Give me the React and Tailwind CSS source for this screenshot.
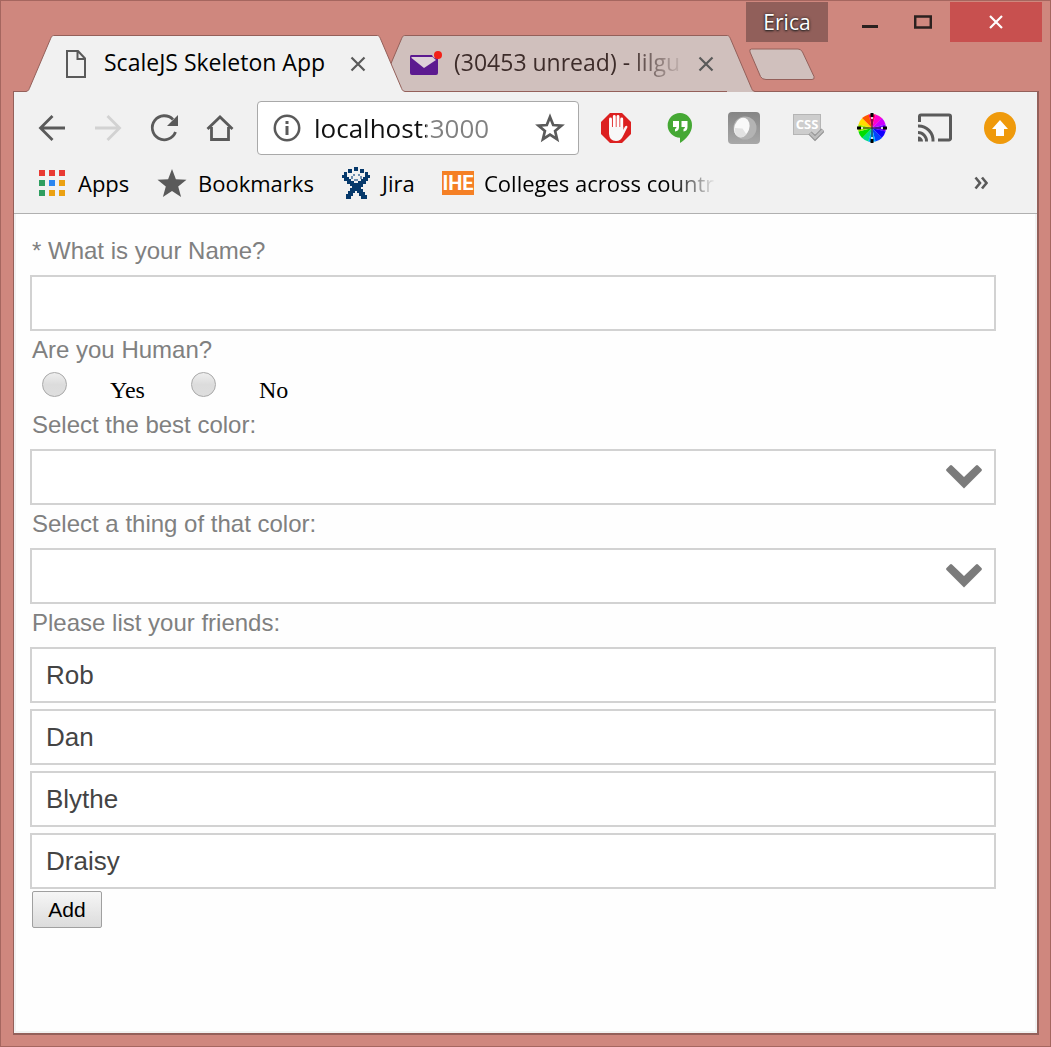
import React from "react";

const UI = "font-['Open_Sans','Noto_Sans',sans-serif]";
const ARIAL = "font-['Liberation_Sans',Arial,sans-serif]";

function TabEdge({ side, fill, stroke }) {
  const left = side === "left";
  return (
    <svg width="28" height="57" viewBox="0 0 28 57" className="block shrink-0">
      <g transform={left ? undefined : "translate(28 0) scale(-1 1)"}>
        <path d="M0 57V56.5C3 56 3 54 4 52L24 5C25.500 1.500 26 .5 28 .5V57Z" fill={fill} />
        <path d="M0 56.5C3 56 3 54 4 52L24 5C25.500 1.500 26 .5 28 .5" fill="none" stroke={stroke} />
      </g>
    </svg>
  );
}

function CloseX() {
  return (
    <svg width="16" height="16" viewBox="0 0 16 16" stroke="#5a5a5a" strokeWidth="2.200">
      <path d="M1.500 1.500l13 13M14.500 1.500l-13 13" />
    </svg>
  );
}

function WindowControls() {
  return (
    <div className="flex h-[41px] justify-end pt-px pr-2">
      <button className={`${UI} mr-[15px] w-[82px] bg-[#915f5a] text-[21px] leading-[40px] text-white [text-shadow:0_0_3px_#222,0_1px_2px_#222]`}>
        Erica
      </button>
      <button aria-label="Minimize" className="flex w-[53px] items-center justify-center">
        <svg width="18" height="16" viewBox="0 0 18 16"><path d="M1 11h16v3H1z" fill="#2b211f" /></svg>
      </button>
      <button aria-label="Maximize" className="flex w-[54px] items-center justify-center">
        <svg width="18" height="14" viewBox="0 0 18 14"><path d="M1.200 1.500h15.600v11H1.200z" fill="none" stroke="#2b211f" strokeWidth="2.500" /></svg>
      </button>
      <button aria-label="Close" className="flex w-[92px] items-center justify-center bg-[#c8504f]">
        <svg width="14" height="14" viewBox="0 0 14 14" stroke="#fff" strokeWidth="2.200"><path d="M1 1l12 12M13 1L1 13" /></svg>
      </button>
    </div>
  );
}

function Tabs() {
  return (
    <div className="relative z-10 -mt-[7px] -mb-px flex h-[57px] pl-[25px]">
      <div className="relative z-10 flex">
        <TabEdge side="left" fill="#f1f1f1" stroke="#94605a" />
        <div className="flex w-[323px] items-center border-t border-[#94605a] bg-[#f1f1f1] pl-[11px]">
          <svg width="22" height="28" viewBox="0 0 22 28" fill="none" stroke="#5a5a5a" strokeWidth="2">
            <path d="M2 1h11l7 7.500V27H2zM12.500 1v8H20" />
          </svg>
          <span className={`${UI} ml-[17px] flex-1 pb-[3px] text-[23px] whitespace-nowrap text-black`}>ScaleJS Skeleton App</span>
          <button aria-label="Close tab" className="mr-[11px]"><CloseX /></button>
        </div>
        <TabEdge side="right" fill="#f1f1f1" stroke="#94605a" />
      </div>
      <div className="-ml-[28px] flex">
        <TabEdge side="left" fill="#d0c0bd" stroke="#94605a" />
        <div className="flex w-[322px] items-center border-y border-[#94605a] bg-[#d0c0bd] pl-[3px]">
          <svg width="34" height="28" viewBox="0 0 34 28">
            <path d="M3 5h21a5 5 0 0 0 6 3v15a2 2 0 0 1-2 2H4a2 2 0 0 1-2-2V7a2 2 0 0 1 1-2z" fill="#5c1a90" />
            <path d="M3.500 7h21L28 10l-12 8L3.500 8z" fill="#ded0d8" />
            <circle cx="30" cy="5" r="4" fill="#f32018" />
          </svg>
          <span className={`${UI} ml-[12px] w-[232px] overflow-hidden pb-[3px] text-[23px] whitespace-nowrap text-[#3d2c2a] [mask-image:linear-gradient(to_right,#000_75%,transparent)]`}>
            (30453 unread) - lilgu
          </span>
          <button aria-label="Close tab" className="ml-[12px]"><CloseX /></button>
        </div>
        <TabEdge side="right" fill="#d0c0bd" stroke="#94605a" />
      </div>
      <button aria-label="New tab" className="-ml-[7px] self-start pt-[13px]">
        <svg width="68" height="34" viewBox="0 0 68 34">
          <path d="M3.500 1H50q3 0 4.500 3L66 28.500q1 3-2 3H18q-4 0-5.500-3L2 4Q1 1 3.500 1z" fill="#d0c0bd" stroke="#94605a" />
        </svg>
      </button>
    </div>
  );
}

function NavButton({ label, children, color = "#5a5a5a" }) {
  return (
    <button aria-label={label} className="flex h-8 w-8 shrink-0 items-center justify-center">
      <svg width="32" height="32" viewBox="0 0 32 32" fill="none" stroke={color} strokeWidth="2.800">
        {children}
      </svg>
    </button>
  );
}

function ExtButton({ label, children }) {
  return (
    <button aria-label={label} className="h-8 w-8 shrink-0">
      <svg width="32" height="32" viewBox="0 0 32 32">{children}</svg>
    </button>
  );
}

const WHEEL = ["#f06", "#f0c", "#c0f", "#70f", "#10f", "#04f", "#0af", "#0d8", "#0d0", "#9e0", "#fd0", "#f50"];

function wedge(i) {
  const a = ((i * 30 - 105) * Math.PI) / 180;
  const b = ((i * 30 - 74) * Math.PI) / 180;
  return `M16 16L${16 + 14 * Math.cos(a)} ${16 + 14 * Math.sin(a)}A14 14 0 0 1 ${16 + 14 * Math.cos(b)} ${16 + 14 * Math.sin(b)}Z`;
}

function Toolbar() {
  return (
    <div className="flex h-[72px] items-center pr-[21px] pl-[22px]">
      <div className="flex gap-6">
        <NavButton label="Back"><path d="M29 16H4.500M16.500 4L4.500 16l12 12" /></NavButton>
        <NavButton label="Forward" color="#d2d2d2"><path d="M3 16h24.500M15.500 4l12 12-12 12" /></NavButton>
        <NavButton label="Reload">
          <path d="M25 7.500A12 12 0 1 0 27.500 20" />
          <path d="M30 3v11H19z" fill="#5a5a5a" stroke="none" />
        </NavButton>
        <NavButton label="Home"><path d="M3.500 17L16 5l12.500 12M7.500 15v12.500h17V15" /></NavButton>
      </div>
      <div className="mx-[21px] flex h-[54px] flex-1 items-center rounded-[4px] border border-[#a9a9a9] bg-white pr-[12px] pl-[15px]">
        <svg width="28" height="28" viewBox="0 0 28 28" fill="none" stroke="#5a5a5a" strokeWidth="2.500" className="shrink-0">
          <circle cx="14" cy="14" r="12.200" />
          <path d="M14 12v9M14 7v3" strokeWidth="3" />
        </svg>
        <input
          aria-label="Address"
          defaultValue="localhost:3000"
          className={`${UI} ml-[13px] w-0 min-w-0 flex-1 bg-[linear-gradient(to_right,#111_112px,#808080_112px)] bg-clip-text text-[26px] text-transparent outline-none`}
        />
        <button aria-label="Bookmark this page">
          <svg width="32" height="32" viewBox="0 0 32 32" fill="none" stroke="#5a5a5a" strokeWidth="2.700">
            <path d="M16 5l3.200 8 8.300.6-6.400 5.400 2 8.200L16 22.700l-7.100 4.500 2-8.200-6.400-5.400 8.300-.6z" />
          </svg>
        </button>
      </div>
      <div className="flex gap-8">
        <ExtButton label="Ad blocker">
          <path d="M10 1h12l9 9v12l-9 9H10l-9-9V10z" fill="#dc2020" />
          <path d="M10.500 7v11M14.300 4.500V17M18 4.500V17M21.700 7v12" stroke="#fff" strokeWidth="2.900" strokeLinecap="round" />
          <path d="M9 15h14.200v3l1.800-3.500q2-1.500 2.500.5l-4.500 9q-2 5-7 5-6.500 0-7-7z" fill="#f8f8f8" />
        </ExtButton>
        <ExtButton label="Hangouts">
          <path d="M16 1a12 12 0 0 1 12 12.500C28 21 22 27 16 31v-5.300A12.300 12.300 0 0 1 16 1z" fill="#45a834" />
          <path d="M9 9h6v6q0 4-4 4.500V17q1.500-.5 1.500-2H9zM17.500 9h6v6q0 4-4 4.500V17q1.500-.5 1.500-2h-3.500z" fill="#fff" />
        </ExtButton>
        <ExtButton label="Extension">
          <defs>
            <linearGradient id="tile" x1="0" y1="0" x2="0" y2="1"><stop stopColor="#858585" /><stop offset="1" stopColor="#a8a8a8" /></linearGradient>
          </defs>
          <rect width="32" height="32" rx="4" fill="url(#tile)" />
          <circle cx="17" cy="16" r="11.500" fill="#b3b3b3" />
          <ellipse cx="14" cy="15.500" rx="7.500" ry="10" transform="rotate(20 14 15)" fill="#f9f9f9" />
          <path d="M6.500 16l8 .5 4 6q-3 3.500-6.500 3-5-1-5.500-9.500z" fill="#e2e2e2" />
        </ExtButton>
        <ExtButton label="CSS validator">
          <rect x="1.500" y="2.500" width="27" height="20" fill="#cdcdcd" stroke="#b5b5b5" />
          <text x="15" y="17" textAnchor="middle" fontFamily="Open Sans, sans-serif" fontWeight="700" fontSize="13" fill="#fff">CSS</text>
          <path d="M18 21l5 5 8-8" fill="none" stroke="#8f8f8f" strokeWidth="4.500" />
          <path d="M18 21l5 5 8-8" fill="none" stroke="#bdbdbd" strokeWidth="2.500" />
        </ExtButton>
        <ExtButton label="Color picker">
          {WHEEL.map((c, i) => (
            <path key={c} d={wedge(i)} fill={c} />
          ))}
          <path d="M16 2v28M2 16h28" stroke="#222" strokeWidth="1" />
          <path d="M14.500 1h3v4h-3zM14.500 27h3v4h-3zM1 14.500h4v3H1zM27 14.500h4v3h-4z" fill="#000" />
          <path d="M15 5h2v2h-2zM15 25h2v2h-2zM5 15h2v2H5zM25 15h2v2h-2z" fill="#fff" opacity=".8" />
        </ExtButton>
        <button aria-label="Cast" className="h-8 w-8">
          <svg width="36" height="32" viewBox="0 0 36 32" fill="none" stroke="#5a5a5a" strokeWidth="3" className="-ml-[3px]">
            <path d="M2.500 10V4.500a1.500 1.500 0 0 1 1.500-1.500h28a1.500 1.500 0 0 1 1.500 1.500v22a1.500 1.500 0 0 1-1.500 1.500H21" />
            <path d="M1 20.500a8.500 8.500 0 0 1 8.500 9M1 14a14.500 14.500 0 0 1 15 15.500" />
            <path d="M1 24.500a5 5 0 0 1 5 5H1z" fill="#5a5a5a" stroke="none" />
          </svg>
        </button>
        <ExtButton label="Update available">
          <circle cx="16" cy="16" r="16" fill="#ef9a0c" />
          <path d="M16 8l8 9h-4v7h-8v-7H8z" fill="#fff" />
        </ExtButton>
      </div>
    </div>
  );
}

const APP_DOTS = ["#e93a33", "#e93a33", "#e93a33", "#2f9e60", "#2b86f0", "#eba112", "#2f9e60", "#eba112", "#eba112"];

function BookmarksBar() {
  return (
    <nav className={`${UI} flex h-[50px] items-start border-b border-[#b0b0b0] pl-[22px] text-[22px] leading-[38px] text-black`}>
      <a href="#apps" className="flex items-center">
        <svg width="32" height="32" viewBox="0 0 32 32">
          {APP_DOTS.map((c, i) => (
            <rect key={i} x={3 + (i % 3) * 10} y={3 + Math.floor(i / 3) * 10} width="6" height="6" fill={c} />
          ))}
        </svg>
        <span className="ml-[10px] w-[54px] whitespace-nowrap">Apps</span>
      </a>
      <a href="#bookmarks" className="ml-6 flex items-center">
        <svg width="32" height="38" viewBox="0 0 32 38">
          <path d="M16 5l3.900 10.300 10.600.4-8.300 6.800 2.900 10.500L16 27l-9.100 6 2.900-10.500L1.500 15.700l10.600-.4z" fill="#5a5a5a" />
        </svg>
        <span className="ml-[10px] w-[118px] whitespace-nowrap">Bookmarks</span>
      </a>
      <a href="#jira" className="ml-6 flex items-center">
        <svg width="32" height="34" viewBox="0 0 32 34" fill="#06396b" shapeRendering="crispEdges">
          <path d="M14 1h4v4h-4zM8 3h4v4H8zM20 3h4v4h-4zM4 6h3v3H4zM25 6h3v3h-3z" />
          <path d="M2 9h5v2h2v2h2v2h3v2h4v-2h3v-2h2v-2h2V9h5v3h-2v3h-2v3h-3v3h-2v2h2v3h2v3h2v4h-6v-3h-2v-3h-2v-2h-2v2h-2v3h-2v3H6v-5h2v-3h2v-3h2v-2h-2v-2H7v-3H4v-3H2z" />
          <path d="M13 8h2v2h-2zM18 8h2v2h-2zM11 10h2v3h-2zM20 10h2v3h-2zM14 13h4v2h-4z" fill="#6f8fb0" />
        </svg>
        <span className="ml-[10px] w-[36px] whitespace-nowrap">Jira</span>
      </a>
      <a href="#colleges" className="ml-6 flex items-center">
        <span className="flex h-6 w-8 items-center justify-center bg-[#f58025] font-['Roboto',sans-serif] text-[20px] leading-[24px] font-bold text-white">IHE</span>
        <span className="ml-[10px] w-[234px] whitespace-nowrap [mask-image:linear-gradient(to_right,#000_80%,transparent_99%)]">
          Colleges across countr
        </span>
      </a>
      <button aria-label="More bookmarks" className="mr-[49px] ml-auto flex h-[38px] items-center">
        <svg width="14" height="14" viewBox="0 0 14 14" fill="none" stroke="#5a5a5a" strokeWidth="2.600">
          <path d="M1.500 1.500L6 7l-4.500 5.500M8 1.500L12.500 7 8 12.500" />
        </svg>
      </button>
    </nav>
  );
}

const BOX = "block h-[56px] w-full border-2 border-[#d2d2d2] bg-white px-[14px] text-[26px] text-[#444] outline-none rounded-none";
const LABEL = "block h-[43px] pl-[2px] text-[24px] leading-[38px] text-[#808080]";
const RADIO =
  "h-[25px] w-[25px] appearance-none rounded-full border border-[#a8a8a8] bg-[linear-gradient(#eee,#dcdcdc_50%,#dedede)]";

function SelectField({ id, label }) {
  return (
    <div>
      <label htmlFor={id} className={LABEL}>{label}</label>
      <div className="relative">
        <select id={id} className={`${BOX} appearance-none`} defaultValue="">
          <option value=""></option>
        </select>
        <svg width="36" height="24" viewBox="0 0 36 24" className="pointer-events-none absolute top-4 right-[14px]">
          <path d="M6 .5L18 12 30 .5q1-.8 2 0l3.500 3.500q.8 1 0 2L18 23.500.5 6q-.8-1 0-2L4 .5q1-.8 2 0z" fill="#7b7b7b" />
        </svg>
      </div>
    </div>
  );
}

const FRIENDS = ["Rob", "Dan", "Blythe", "Draisy"];

function Form() {
  return (
    <form className={`${ARIAL} flex-1 bg-[#fefefe] pt-[18px] pr-[39px] pb-10 pl-[14px]`} onSubmit={(e) => e.preventDefault()}>
      <label htmlFor="name" className={LABEL}>* What is your Name?</label>
      <input id="name" className={BOX} />
      <fieldset className="h-[75px]">
        <legend className="block pl-[2px] text-[24px] leading-[38px] text-[#808080]">Are you Human?</legend>
        <div className="flex pt-[3px] pl-3 font-['Liberation_Serif','Times_New_Roman',serif] text-[24px] leading-[36px] text-black">
          <input id="yes" type="radio" name="human" className={RADIO} />
          <label htmlFor="yes" className="ml-[43px] w-[81px]">Yes</label>
          <input id="no" type="radio" name="human" className={RADIO} />
          <label htmlFor="no" className="ml-[43px]">No</label>
        </div>
      </fieldset>
      <SelectField id="color" label="Select the best color:" />
      <SelectField id="thing" label="Select a thing of that color:" />
      <fieldset>
        <legend className={LABEL}>Please list your friends:</legend>
        <div className="flex flex-col gap-[6px]">
          {FRIENDS.map((name) => (
            <input key={name} aria-label={`Friend ${name}`} defaultValue={name} className={BOX} />
          ))}
        </div>
      </fieldset>
      <button className="mt-[2px] ml-[2px] h-[37px] w-[70px] rounded-[2px] border border-[#a0a0a0] bg-[linear-gradient(#f6f6f6,#dcdcdc)] text-[21px] text-black">
        Add
      </button>
    </form>
  );
}

export default function App() {
  return (
    <div className="flex min-h-screen flex-col border border-[#a5665f] bg-[#cf877e]">
      <WindowControls />
      <Tabs />
      <div className="mr-[11px] mb-[11px] ml-[12px] flex flex-1 flex-col border border-r-2 border-b-2 border-[#94605a] bg-[#f1f1f1]">
        <Toolbar />
        <BookmarksBar />
        <div className="mx-[2px] mb-[2px] flex flex-1 flex-col">
          <Form />
        </div>
      </div>
    </div>
  );
}
